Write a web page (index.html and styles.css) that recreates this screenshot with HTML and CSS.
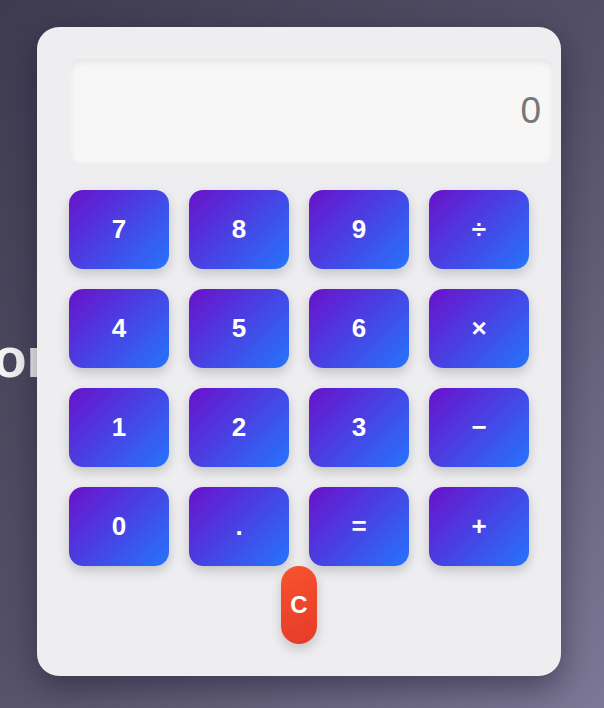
FILE: index.html
```html
<!DOCTYPE html>
<html lang="en">
<head>
<meta charset="utf-8">
<title>Calculator</title>
<link rel="stylesheet" href="styles.css">
</head>
<body>
<h1 class="title">Calculator</h1>
<div class="calculator">
  <div class="display">0</div>
  <div class="keys">
    <button class="key">7</button>
    <button class="key">8</button>
    <button class="key">9</button>
    <button class="key">÷</button>
    <button class="key">4</button>
    <button class="key">5</button>
    <button class="key">6</button>
    <button class="key">×</button>
    <button class="key">1</button>
    <button class="key">2</button>
    <button class="key">3</button>
    <button class="key">−</button>
    <button class="key">0</button>
    <button class="key">.</button>
    <button class="key">=</button>
    <button class="key">+</button>
  </div>
  <div class="clear-row">
    <button class="key clear">C</button>
  </div>
</div>
</body>
</html>
```

FILE: styles.css
```css
* { box-sizing: border-box; }
html, body { margin: 0; padding: 0; }
body {
  width: 604px;
  height: 708px;
  overflow: hidden;
  position: relative;
  display: flex;
  align-items: center;
  justify-content: center;
  background: linear-gradient(135deg, #3e3a50 0%, #545067 50%, #7c7795 100%);
  font-family: "Liberation Sans", Arial, sans-serif;
}
.title {
  position: absolute;
  right: 556px;
  top: 331px;
  margin: 0;
  font-size: 55px;
  line-height: 1;
  font-weight: 700;
  color: #f2f2f4;
  white-space: nowrap;
  z-index: 0;
}
.calculator {
  position: relative;
  z-index: 1;
  width: 524px;
  height: 649px;
  margin-right: 6px;
  margin-bottom: 5px;
  padding: 32px;
  background: #eeeef0;
  border-radius: 22px;
  box-shadow: 0 12px 30px rgba(20, 16, 40, 0.45);
}
.display {
  width: 483px;
  height: 104px;
  margin-left: 1px;
  padding: 0 12px;
  background: #f7f7f7;
  border-radius: 10px;
  box-shadow: inset 0 3px 7px rgba(0, 0, 0, 0.08);
  display: flex;
  align-items: center;
  justify-content: flex-end;
  font-size: 37px;
  color: #777;
}
.keys {
  margin-top: 27px;
  display: grid;
  grid-template-columns: repeat(4, 100px);
  grid-auto-rows: 79px;
  column-gap: 20px;
  row-gap: 20px;
}
.key {
  border: none;
  border-radius: 14px;
  background: linear-gradient(135deg, #6a11cb 0%, #2575fc 100%);
  color: #fff;
  font-family: "Liberation Sans", Arial, sans-serif;
  font-size: 26px;
  font-weight: 700;
  box-shadow: 0 5px 12px rgba(0, 0, 0, 0.18);
  padding: 0;
}
.clear-row {
  display: flex;
  justify-content: center;
  width: 460px;
}
.clear {
  width: 36px;
  height: 78px;
  border-radius: 18px;
  background: linear-gradient(160deg, #f7532f 0%, #e53a2a 100%);
  font-size: 24px;
}
```
